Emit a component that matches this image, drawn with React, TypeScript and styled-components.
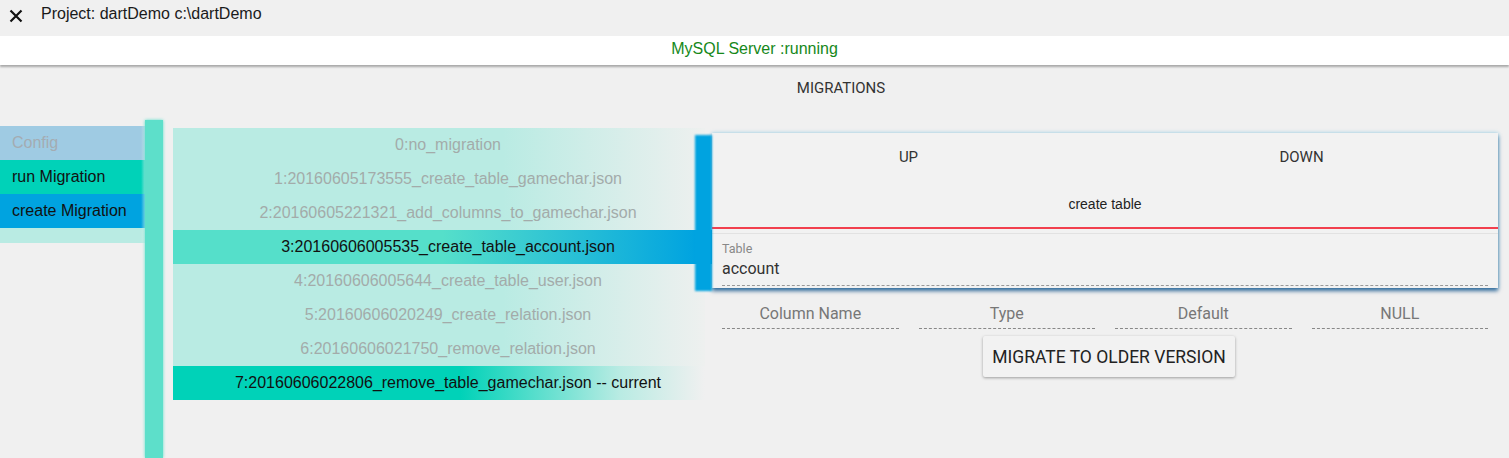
import styled, { createGlobalStyle } from 'styled-components'

const GlobalStyle = createGlobalStyle`
  html, body {
    margin: 0;
    padding: 0;
    background: #f0f0f0;
    font-family: "Liberation Sans", Arial, sans-serif;
  }
`

const migrations = [
  '0:no_migration',
  '1:20160605173555_create_table_gamechar.json',
  '2:20160605221321_add_columns_to_gamechar.json',
  '3:20160606005535_create_table_account.json',
  '4:20160606005644_create_table_user.json',
  '5:20160606020249_create_relation.json',
  '6:20160606021750_remove_relation.json',
  '7:20160606022806_remove_table_gamechar.json -- current',
]

const SELECTED = 3
const CURRENT = 7

type Tone = 'plain' | 'selected' | 'current'

const rowBackground: Record<Tone, string> = {
  plain: 'linear-gradient(to right, #b9ebe3 0%, #b9ebe3 62%, #eef0ef 100%)',
  selected: 'linear-gradient(to right, #55dfca 0%, #55dfca 50%, #00a3e0 97%, #00a3e0 100%)',
  current: 'linear-gradient(to right, #00d2b8 0%, #00d2b8 54%, #b9ebe3 84%, rgba(240,240,240,0) 100%)',
}

const navColors = {
  config: { bg: '#9fcbe3', fg: '#a4acb2' },
  run: { bg: '#00d2b8', fg: '#111' },
  create: { bg: '#00a3e0', fg: '#111' },
}

const Page = styled.div`
  display: flex;
  flex-direction: column;
  min-height: 100vh;
`

const TopBar = styled.div`
  display: flex;
  align-items: center;
  height: 36px;
  padding-left: 9px;
  gap: 18px;
  font-size: 16px;
  color: #1a1a1a;
`

const CloseButton = styled.svg`
  width: 14px;
  height: 14px;
  margin-top: -4px;
`

const Title = styled.span`
  margin-top: -8px;
`

const StatusBar = styled.div`
  height: 29px;
  padding-bottom: 3px;
  box-sizing: border-box;
  background: #fff;
  box-shadow: 0 2px 2px rgba(0, 0, 0, 0.3);
  display: flex;
  align-items: center;
  justify-content: center;
  font-size: 16px;
  color: #16881a;
  position: relative;
  z-index: 1;
`

const Main = styled.div`
  flex: 1;
  display: flex;
`

const Sidebar = styled.nav`
  width: 150px;
  margin-right: -5px;
  padding-top: 61px;
  display: flex;
  flex-direction: column;
`

const NavItem = styled.div<{ $bg: string; $fg: string }>`
  height: 34px;
  display: flex;
  align-items: center;
  padding-left: 12px;
  font-size: 16px;
  color: ${(p) => p.$fg};
  background: linear-gradient(to right, ${(p) => p.$bg} 0%, ${(p) => p.$bg} 94%, rgba(240, 240, 240, 0) 100%);
`

const NavTail = styled.div`
  height: 15px;
  background: linear-gradient(to right, #b9ebe3 0%, #b9ebe3 94%, rgba(240, 240, 240, 0) 100%);
`

const Rail = styled.div`
  width: 18px;
  margin-top: 55px;
  background: #5ddfca;
  box-shadow: 0 0 3px #5ddfca;
  position: relative;
  z-index: 1;
`

const Content = styled.div`
  flex: 1;
  padding-left: 10px;
  display: flex;
  flex-direction: column;
`

const Heading = styled.div`
  height: 46px;
  line-height: 46px;
  text-align: center;
  font-family: Roboto, sans-serif;
  font-size: 15px;
  color: #333;
  margin-bottom: 17px;
`

const Columns = styled.div`
  display: flex;
  gap: 7px;
`

const MigrationList = styled.div`
  width: 532px;
  display: flex;
  flex-direction: column;
`

const MigrationRow = styled.div<{ $tone: Tone }>`
  height: 34px;
  display: flex;
  align-items: center;
  justify-content: center;
  padding-left: 18px;
  font-size: 16px;
  color: ${(p) => (p.$tone === 'plain' ? '#a3abaa' : '#111')};
  background: ${(p) => rowBackground[p.$tone]};
  margin-right: ${(p) => (p.$tone === 'selected' ? '-7px' : '0')};
  padding-right: ${(p) => (p.$tone === 'selected' ? '7px' : '0')};
`

const Detail = styled.div`
  width: 786px;
  padding-top: 5px;
  display: flex;
  flex-direction: column;
`

const Card = styled.div`
  position: relative;
  height: 155px;
  background: #f2f2f2;
  box-shadow: 0 3px 4px rgba(0, 70, 130, 0.75), 0 0 4px rgba(0, 163, 224, 0.35);
  display: flex;
  flex-direction: column;

  &::before {
    content: '';
    position: absolute;
    left: -17px;
    top: 2px;
    width: 17px;
    height: 156px;
    background: #00a3e0;
    filter: blur(1px);
  }
`

const Tabs = styled.div`
  display: flex;
  height: 48px;
`

const Tab = styled.div`
  flex: 1;
  display: flex;
  align-items: center;
  justify-content: center;
  font-family: Roboto, sans-serif;
  font-size: 15px;
  color: #333;
`

const ActionLabel = styled.div`
  height: 48px;
  display: flex;
  align-items: center;
  justify-content: center;
  box-sizing: border-box;
  font-size: 14px;
  color: #222;
  border-bottom: 2px solid #f2404e;
`

const Divider = styled.div`
  height: 4px;
  border-bottom: 1px solid #e2e2e2;
`

const Field = styled.div`
  margin: 0 10px 2px;
  padding-top: 7px;
  flex: 1;
  display: flex;
  flex-direction: column;
  font-family: Roboto, sans-serif;
  border-bottom: 1px dashed #999;
`

const FieldLabel = styled.span`
  font-size: 12.5px;
  color: #888;
  line-height: 16px;
`

const FieldValue = styled.span`
  font-size: 16px;
  color: #333;
  line-height: 24px;
`

const ColumnHeaders = styled.div`
  display: grid;
  grid-template-columns: repeat(4, 1fr);
  column-gap: 20px;
  margin: 10px 10px 0;
`

const ColumnHeader = styled.div`
  height: 30px;
  display: flex;
  align-items: center;
  justify-content: center;
  font-family: Roboto, sans-serif;
  font-size: 16px;
  color: #777;
  border-bottom: 1px dashed #888;
`

const ButtonRow = styled.div`
  display: flex;
  justify-content: center;
  padding-top: 7px;
  padding-left: 8px;
`

const MigrateButton = styled.button`
  height: 41px;
  padding: 0 9px;
  border: none;
  border-radius: 2px;
  background: #f2f2f2;
  box-shadow: 0 1px 3px rgba(0, 0, 0, 0.35);
  font-family: Roboto, sans-serif;
  font-size: 17.5px;
  color: #222;
  text-transform: uppercase;
  cursor: pointer;
`

export default function App() {
  const toneOf = (i: number): Tone =>
    i === SELECTED ? 'selected' : i === CURRENT ? 'current' : 'plain'

  return (
    <Page>
      <GlobalStyle />
      <TopBar>
        <CloseButton viewBox="0 0 14 14">
          <path d="M1.5 1.5 L12.5 12.5 M12.5 1.5 L1.5 12.5" stroke="#111" strokeWidth="2.2" />
        </CloseButton>
        <Title>Project: dartDemo c:\dartDemo</Title>
      </TopBar>
      <StatusBar>MySQL Server :running</StatusBar>
      <Main>
        <Sidebar>
          <NavItem $bg={navColors.config.bg} $fg={navColors.config.fg}>Config</NavItem>
          <NavItem $bg={navColors.run.bg} $fg={navColors.run.fg}>run Migration</NavItem>
          <NavItem $bg={navColors.create.bg} $fg={navColors.create.fg}>create Migration</NavItem>
          <NavTail />
        </Sidebar>
        <Rail />
        <Content>
          <Heading>MIGRATIONS</Heading>
          <Columns>
            <MigrationList>
              {migrations.map((m, i) => (
                <MigrationRow key={m} $tone={toneOf(i)}>
                  {m}
                </MigrationRow>
              ))}
            </MigrationList>
            <Detail>
              <Card>
                <Tabs>
                  <Tab>UP</Tab>
                  <Tab>DOWN</Tab>
                </Tabs>
                <ActionLabel>create table</ActionLabel>
                <Divider />
                <Field>
                  <FieldLabel>Table</FieldLabel>
                  <FieldValue>account</FieldValue>
                </Field>
              </Card>
              <ColumnHeaders>
                <ColumnHeader>Column Name</ColumnHeader>
                <ColumnHeader>Type</ColumnHeader>
                <ColumnHeader>Default</ColumnHeader>
                <ColumnHeader>NULL</ColumnHeader>
              </ColumnHeaders>
              <ButtonRow>
                <MigrateButton>Migrate to older version</MigrateButton>
              </ButtonRow>
            </Detail>
          </Columns>
        </Content>
      </Main>
    </Page>
  )
}
